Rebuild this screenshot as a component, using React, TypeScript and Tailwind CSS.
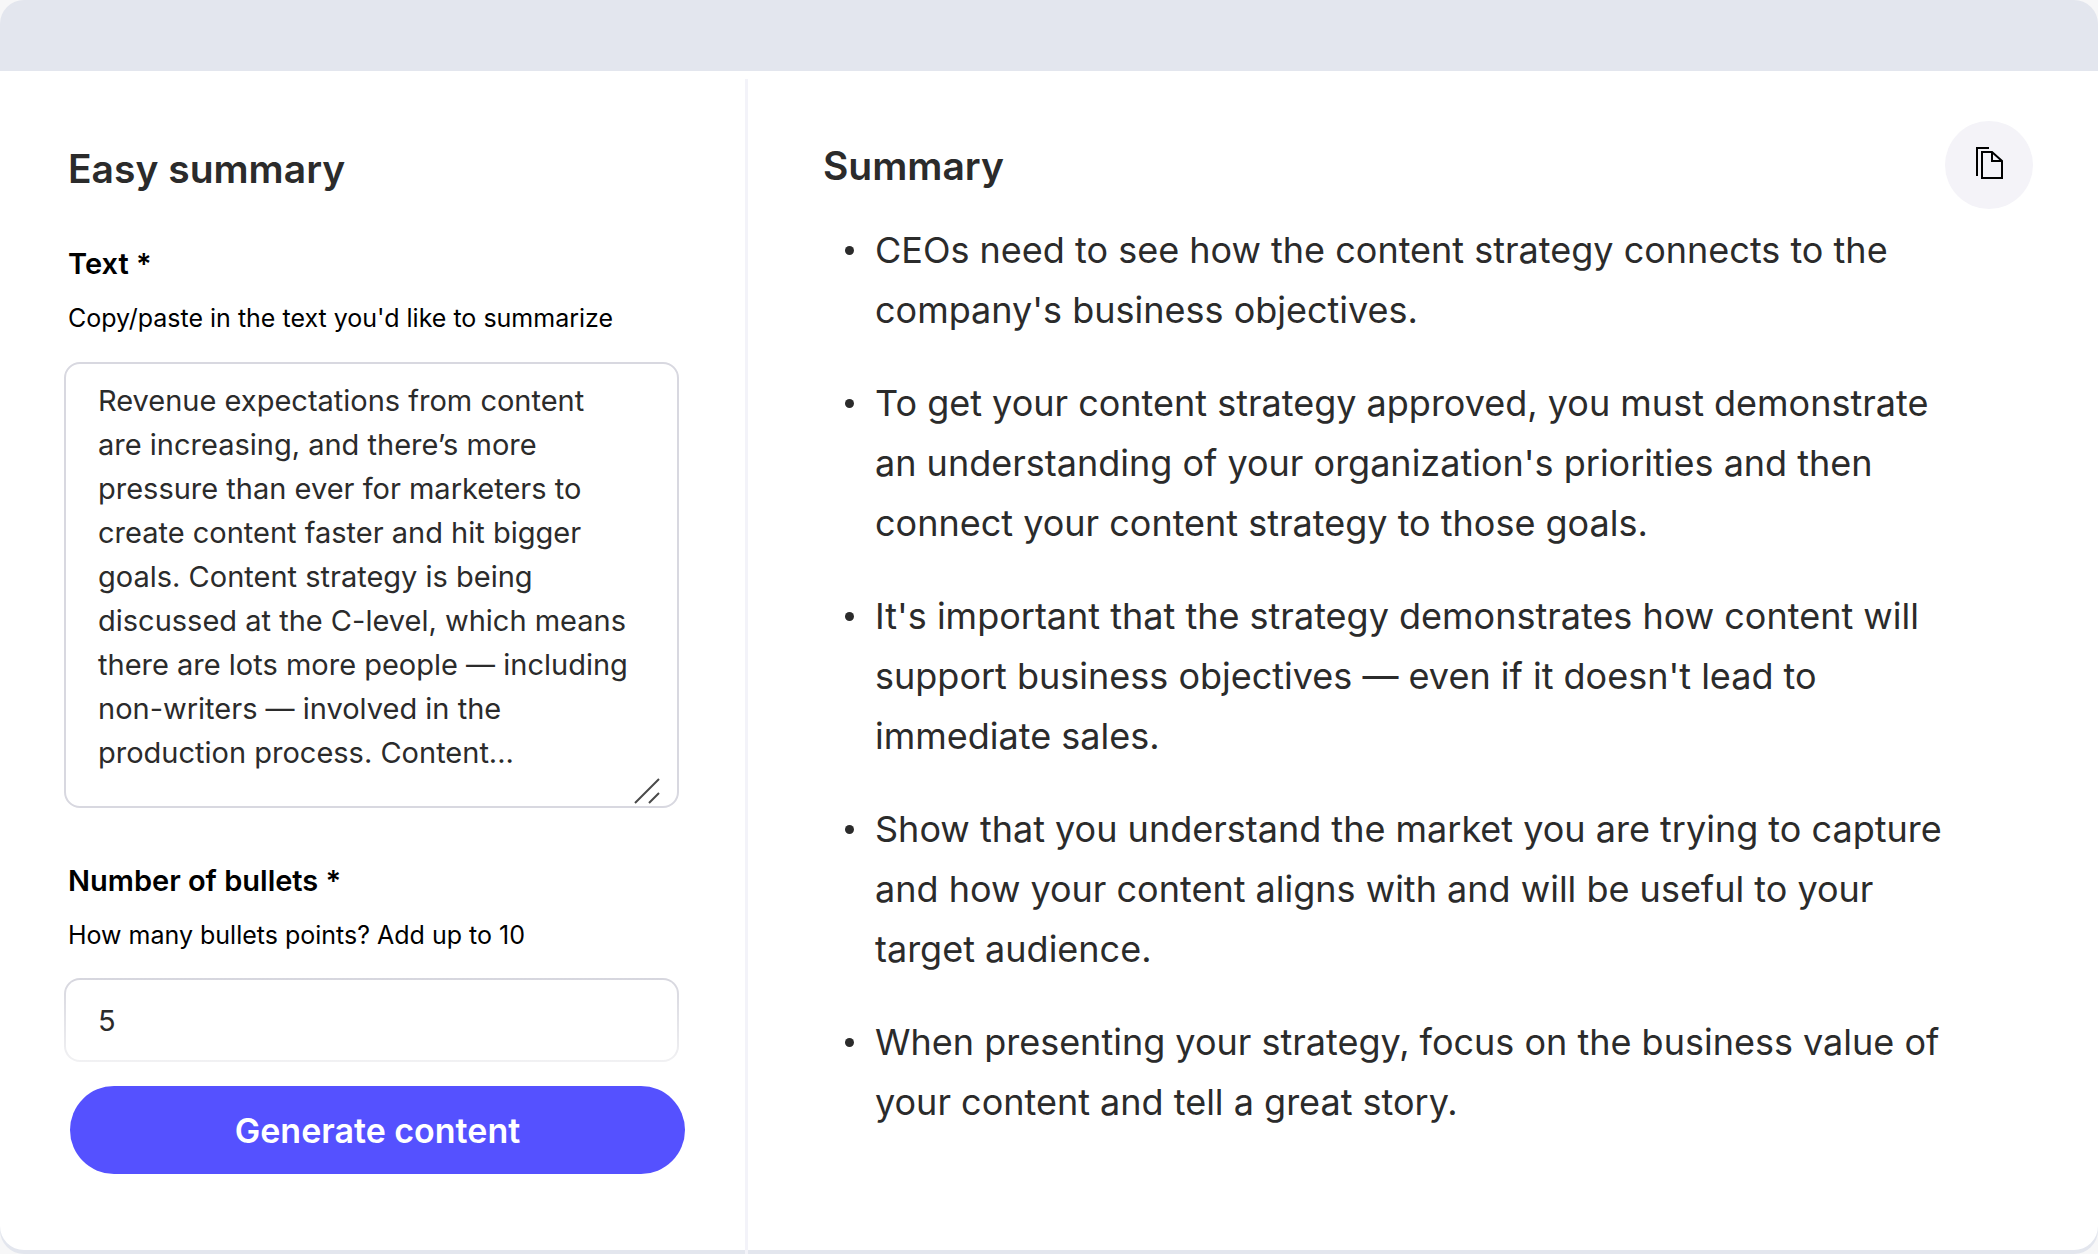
import { useState } from "react";

const initialText = `Revenue expectations from content
are increasing, and there’s more
pressure than ever for marketers to
create content faster and hit bigger
goals. Content strategy is being
discussed at the C-level, which means
there are lots more people — including
non-writers — involved in the
production process. Content...`;

const bullets = [
  `CEOs need to see how the content strategy connects to the
company's business objectives.`,
  `To get your content strategy approved, you must demonstrate
an understanding of your organization's priorities and then
connect your content strategy to those goals.`,
  `It's important that the strategy demonstrates how content will
support business objectives — even if it doesn't lead to
immediate sales.`,
  `Show that you understand the market you are trying to capture
and how your content aligns with and will be useful to your
target audience.`,
  `When presenting your strategy, focus on the business value of
your content and tell a great story.`,
];

function CopyIcon() {
  return (
    <svg width="28" height="34" viewBox="0 0 28 34" fill="none" stroke="black" strokeWidth="2" aria-hidden="true">
      <path d="M2 30V2H14" />
      <path d="M7 6H17L27 15V32H7Z" />
      <path d="M17 6V15H27" />
    </svg>
  );
}

export default function App() {
  const [text, setText] = useState(initialText);
  const [count, setCount] = useState("5");

  const copySummary = () => {
    navigator.clipboard?.writeText(bullets.join("\n"));
  };

  return (
    <div className="min-h-screen bg-[#f7f7f8] font-['Inter',sans-serif] text-[#2b2b2b] flex flex-col">
      <div className="grow flex flex-col rounded-3xl bg-[#e3e6ee] pb-1">
        {/* Window bar */}
        <header className="h-[71px] shrink-0" />

        <main className="grow flex bg-white rounded-b-3xl">
          {/* Form */}
          <form className="w-[36%] max-w-[745px] shrink-0 pl-16 pr-[66px] pt-[73px]" onSubmit={(e) => e.preventDefault()}>
            <h1 className="pl-1 text-[39px] leading-[50px] font-semibold">Easy summary</h1>

            <label htmlFor="text" className="block pl-1 mt-[50px] text-[29px] leading-10 font-semibold text-black">
              Text *
            </label>
            <p id="text-hint" className="pl-1 mt-4 text-[25px] leading-9 text-black">
              Copy/paste in the text you'd like to summarize
            </p>
            <div className="relative mt-[26px]">
              <textarea
                id="text"
                aria-describedby="text-hint"
                rows={9}
                value={text}
                onChange={(e) => setText(e.target.value)}
                className="block w-full h-[446px] resize-none overflow-hidden rounded-2xl border-2 border-[#d8d8e0] bg-white pl-8 pr-4 pt-[15px] text-[29px] leading-[44px] outline-none"
              />
              <svg className="absolute right-[19px] bottom-[4px]" width="26" height="26" viewBox="0 0 26 26" stroke="#4a4a4a" strokeWidth="2" aria-hidden="true">
                <path d="M1 25L25 1M15 25L25 15" />
              </svg>
            </div>

            <label htmlFor="bullets" className="block pl-1 mt-[53px] text-[29px] leading-10 font-semibold text-black">
              Number of bullets *
            </label>
            <p id="bullets-hint" className="pl-1 mt-4 text-[25px] leading-9 text-black">
              How many bullets points? Add up to 10
            </p>
            <div className="mt-[25px] rounded-2xl bg-linear-to-b from-[#d6d6de] to-[#f1f1f3] p-[2px]">
              <input
                id="bullets"
                type="text"
                inputMode="numeric"
                aria-describedby="bullets-hint"
                value={count}
                onChange={(e) => setCount(e.target.value)}
                className="block w-full h-20 rounded-[14px] bg-white px-8 text-[29px] outline-none"
              />
            </div>

            <div className="mt-6 pl-[6px] -mr-[6px]">
              <button type="submit" className="w-full h-[88px] rounded-full bg-[#5551ff] text-[34px] font-semibold text-white">
                Generate content
              </button>
            </div>
          </form>

          <div className="w-[3px] shrink-0 mt-2 -mb-1 bg-[#f3f3f9]" />

          {/* Result */}
          <section className="grow min-w-0 pl-[75px] pr-[65px] pt-[50px] pb-20">
            <div className="flex justify-between items-start">
              <h2 className="pt-5 text-[39px] leading-[50px] font-semibold">Summary</h2>
              <button
                type="button"
                aria-label="Copy summary"
                onClick={copySummary}
                className="size-[88px] rounded-full bg-[#f4f3f8] flex items-center justify-center pb-1"
              >
                <CopyIcon />
              </button>
            </div>
            <ul className="mt-[11px] flex flex-col gap-[33px] text-[36px] leading-[60px]">
              {bullets.map((bullet) => (
                <li key={bullet} className="flex pl-[22px]">
                  <span className="mt-[26px] mr-[21px] size-[9px] shrink-0 rounded-full bg-[#2b2b2b]" />
                  <span className="whitespace-pre-line">{bullet}</span>
                </li>
              ))}
            </ul>
          </section>
        </main>
      </div>
    </div>
  );
}
